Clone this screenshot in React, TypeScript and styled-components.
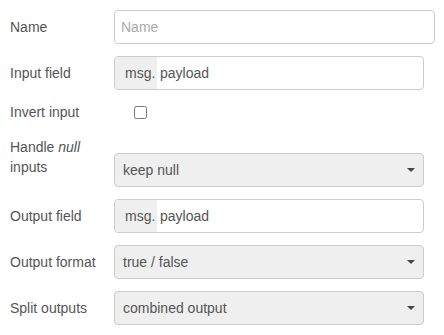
import styled, { createGlobalStyle } from 'styled-components';

const GlobalStyle = createGlobalStyle`
  html, body {
    margin: 0;
    padding: 0;
    background: #fff;
  }

  body {
    font-family: 'Liberation Sans', Arial, sans-serif;
    font-size: 14px;
    color: #555;
  }
`;

const Form = styled.form`
  display: flex;
  flex-direction: column;
  gap: 12px;
  padding: 10px 0 0 10px;
`;

const Row = styled.div<{ $top?: boolean }>`
  display: flex;
  align-items: ${(p) => (p.$top ? 'flex-start' : 'center')};
`;

const Label = styled.label<{ $offset?: number }>`
  width: 104px;
  flex: none;
  line-height: 20px;
  padding-top: ${(p) => p.$offset ?? 0}px;
  color: #555;
`;

const Field = styled.div<{ $width: number; $offset?: number }>`
  box-sizing: border-box;
  display: flex;
  align-items: center;
  width: ${(p) => p.$width}px;
  height: 34px;
  margin-top: ${(p) => p.$offset ?? 0}px;
  border: 1px solid #ccc;
  border-radius: 4px;
  background: #fff;
  overflow: hidden;
`;

const TextInput = styled.input`
  flex: 1;
  min-width: 0;
  height: 100%;
  border: none;
  outline: none;
  padding: 0 6px;
  background: transparent;
  font: inherit;
  color: #555;

  &::placeholder {
    color: #aaa;
  }
`;

const Prefix = styled.span`
  display: flex;
  align-items: center;
  height: 100%;
  width: 42px;
  padding-left: 10px;
  box-sizing: border-box;
  background: #efefef;
  color: #555;
`;

const Value = styled.span`
  padding-left: 3px;
  color: #555;
`;

const SelectBox = styled(Field)`
  background: #efefef;
  justify-content: space-between;
  padding: 0 8px;
`;

const Caret = styled.span`
  width: 0;
  height: 0;
  border-left: 4.5px solid transparent;
  border-right: 4.5px solid transparent;
  border-top: 4px solid #444;
`;

const Check = styled.input`
  width: 13px;
  height: 13px;
  margin: 0 0 0 20px;
`;

const Select = ({ value, offset }: { value: string; offset?: number }) => (
  <SelectBox $width={310} $offset={offset}>
    <span>{value}</span>
    <Caret />
  </SelectBox>
);

const TypedInput = ({ value }: { value: string }) => (
  <Field $width={310}>
    <Prefix>msg.</Prefix>
    <Value>{value}</Value>
  </Field>
);

export default function App() {
  return (
    <>
      <GlobalStyle />
      <Form>
        <Row>
          <Label>Name</Label>
          <Field $width={321}>
            <TextInput placeholder='Name' />
          </Field>
        </Row>
        <Row>
          <Label>Input field</Label>
          <TypedInput value='payload' />
        </Row>
        <Row>
          <Label>Invert input</Label>
          <Check type='checkbox' />
        </Row>
        <Row $top>
          <Label $offset={3}>
            Handle <i>null</i>
            <br />
            inputs
          </Label>
          <Select value='keep null' offset={19} />
        </Row>
        <Row>
          <Label>Output field</Label>
          <TypedInput value='payload' />
        </Row>
        <Row>
          <Label>Output format</Label>
          <Select value='true / false' />
        </Row>
        <Row>
          <Label>Split outputs</Label>
          <Select value='combined output' />
        </Row>
      </Form>
    </>
  );
}
